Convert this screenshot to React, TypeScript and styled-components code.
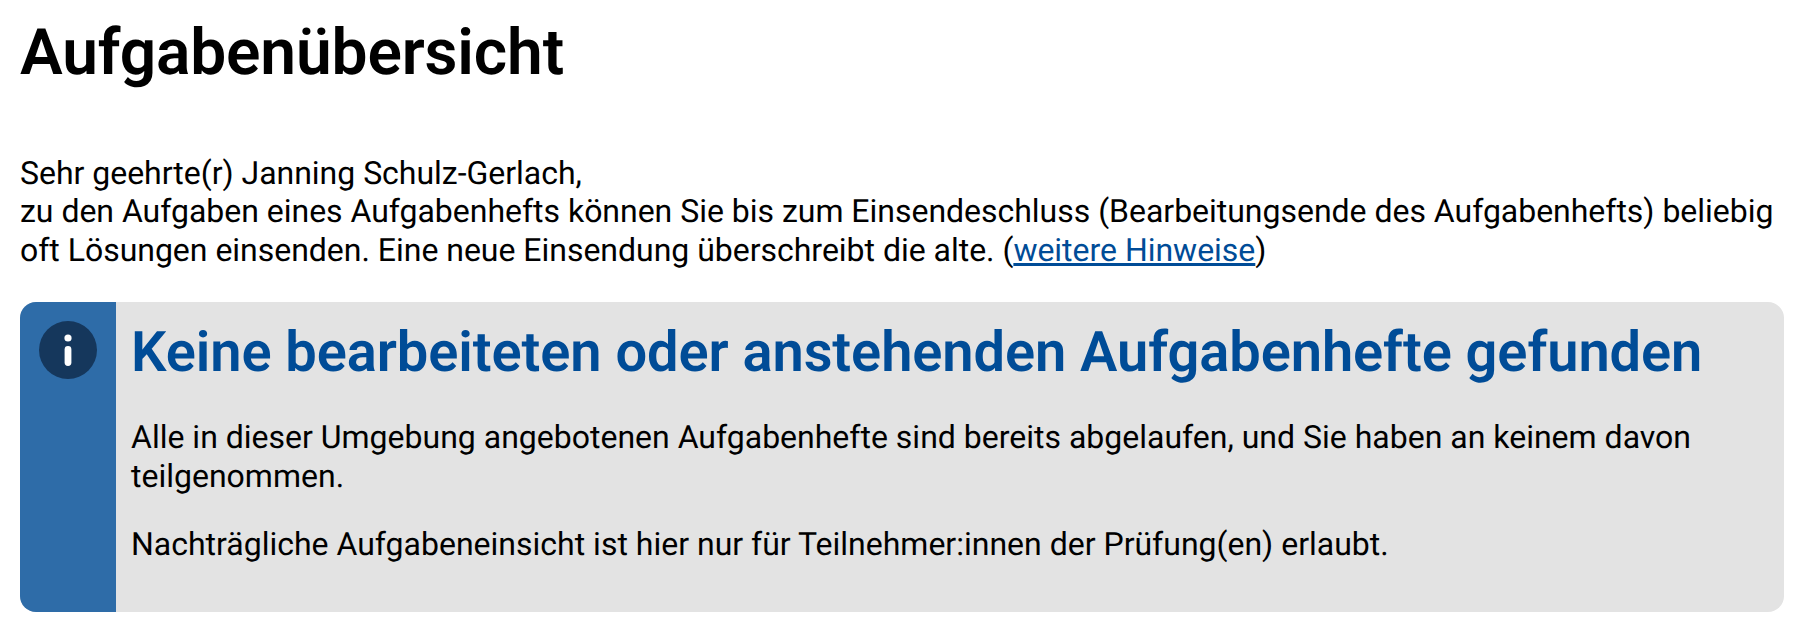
import React from "react";
import styled, { createGlobalStyle } from "styled-components";

const GlobalStyle = createGlobalStyle`
  html, body {
    margin: 0;
    padding: 0;
    background: #fff;
  }
  body {
    font-family: Roboto, "Liberation Sans", sans-serif;
    color: #000;
    text-rendering: geometricPrecision;
  }
`;

const Page = styled.div`
  padding: 15px 18px 19px 20px;
`;

const Title = styled.h1`
  margin: 0;
  font-size: 64px;
  line-height: 75px;
  font-weight: 600;
  letter-spacing: -0.14px;
`;

const Intro = styled.p`
  margin: 64px 0 0;
  font-size: 32px;
  line-height: 38.4px;
  letter-spacing: -0.02px;
`;

const HintLink = styled.a`
  color: #004c97;
  text-decoration: underline;
`;

const Notice = styled.div`
  display: flex;
  margin-top: 33px;
  height: 310px;
  border-radius: 16px;
  overflow: hidden;
  background: #e3e3e3;
`;

const NoticeSide = styled.div`
  flex: 0 0 96px;
  display: flex;
  justify-content: center;
  padding-top: 19px;
  background: #2e6ca8;
`;

const NoticeBody = styled.div`
  flex: 1;
  padding: 17px 50px 0 15px;
`;

const NoticeTitle = styled.h2`
  margin: 0;
  font-size: 56px;
  line-height: 66px;
  font-weight: 600;
  letter-spacing: -0.08px;
  color: #004c97;
`;

const NoticeText = styled.p`
  margin: 30px 0 0;
  font-size: 32px;
  line-height: 38.4px;

  &:first-of-type {
    margin-top: 33px;
  }
`;

const InfoIcon = () => (
  <svg width="58" height="58" viewBox="0 0 58 58">
    <circle cx="29" cy="29" r="29" fill="#15375c" />
    <circle cx="29" cy="17" r="3.6" fill="#fff" />
    <rect x="25.6" y="25" width="6.8" height="20" rx="3.4" fill="#fff" />
  </svg>
);

export default function App() {
  return (
    <Page>
      <GlobalStyle />
      <Title>Aufgabenübersicht</Title>
      <Intro>
        Sehr geehrte(r) Janning Schulz-Gerlach,
        <br />
        zu den Aufgaben eines Aufgabenhefts können Sie bis zum Einsendeschluss (Bearbeitungsende des Aufgabenhefts) beliebig oft Lösungen einsenden. Eine neue Einsendung überschreibt die alte. (<HintLink href="#">weitere Hinweise</HintLink>)
      </Intro>
      <Notice>
        <NoticeSide>
          <InfoIcon />
        </NoticeSide>
        <NoticeBody>
          <NoticeTitle>Keine bearbeiteten oder anstehenden Aufgabenhefte gefunden</NoticeTitle>
          <NoticeText>
            Alle in dieser Umgebung angebotenen Aufgabenhefte sind bereits abgelaufen, und Sie haben an keinem davon teilgenommen.
          </NoticeText>
          <NoticeText>Nachträgliche Aufgabeneinsicht ist hier nur für Teilnehmer:innen der Prüfung(en) erlaubt.</NoticeText>
        </NoticeBody>
      </Notice>
    </Page>
  );
}
